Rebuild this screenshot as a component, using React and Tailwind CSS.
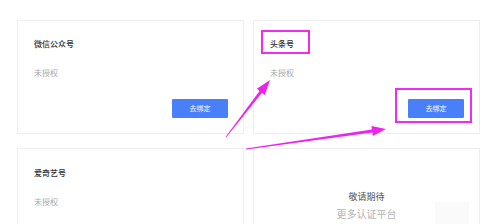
import React from "react";

function arrowPoints(x1, y1, x2, y2, headLen, headW, tailW, neckW) {
  const dx = x2 - x1, dy = y2 - y1;
  const L = Math.hypot(dx, dy);
  const ux = dx / L, uy = dy / L;
  const px = -uy, py = ux;
  const bx = x2 - ux * headLen, by = y2 - uy * headLen;
  const pts = [
    [x1 + px * tailW / 2, y1 + py * tailW / 2],
    [bx + px * neckW / 2, by + py * neckW / 2],
    [bx + px * headW / 2, by + py * headW / 2],
    [x2, y2],
    [bx - px * headW / 2, by - py * headW / 2],
    [bx - px * neckW / 2, by - py * neckW / 2],
    [x1 - px * tailW / 2, y1 - py * tailW / 2],
  ];
  return pts.map((p) => p[0].toFixed(1) + "," + p[1].toFixed(1)).join(" ");
}

function Card({ title, bind, top = "pt-[17px]" }) {
  return (
    <div className={`h-[114px] border border-[#eeeeee] bg-white pl-[16px] pr-[15px] ${top} flex flex-col`}>
      <div className="text-[8px] leading-[12px] text-[#2e2e2e] font-medium">{title}</div>
      <div className="mt-[17px] text-[8px] leading-[12px] text-[#a8a8a8]">未授权</div>
      {bind && (
        <div className="mt-auto mb-[15px] self-end w-[56px] h-[19px] bg-[#4a7ffa] rounded-[1px] flex items-center justify-center text-white text-[7px] leading-none">
          去绑定
        </div>
      )}
    </div>
  );
}

export default function App() {
  return (
    <div
      className="relative w-[492px] h-[224px] overflow-hidden bg-white"
      style={{ fontFamily: '"Noto Sans CJK SC", "Noto Sans", sans-serif' }}
    >
      <div className="pl-[17px] pt-[20px] grid grid-cols-[227px_227px] gap-x-[9px] gap-y-[14px]">
        <Card title="微信公众号" bind />
        <Card title="头条号" bind />
        <Card title="爱奇艺号" top="pt-[18px]" />
        <div className="h-[114px] border border-[#eeeeee] bg-white flex flex-col items-center pt-[41px] relative">
          <div className="text-[9px] leading-[14px] text-[#555555]">敬请期待</div>
          <div className="mt-[3px] text-[10px] leading-[14px] text-[#b5b5b5]">更多认证平台</div>
          <div className="absolute left-[181px] top-[53px] w-[34px] h-[30px] bg-[#fafafa]" />
        </div>
      </div>
      <svg className="absolute left-0 top-0" width="492" height="224" viewBox="0 0 492 224">
        <rect x="262" y="31" width="47" height="22" fill="none" stroke="#f02cf0" strokeWidth="2" />
        <rect x="396" y="89" width="75" height="33" fill="none" stroke="#f02cf0" strokeWidth="2" />
        <polygon points={arrowPoints(226, 137, 270, 80, 15, 10, 0.8, 3)} fill="#ee22ee" />
        <polygon points={arrowPoints(246, 149, 386, 129, 14, 10, 0.8, 3)} fill="#ee22ee" />
      </svg>
    </div>
  );
}
